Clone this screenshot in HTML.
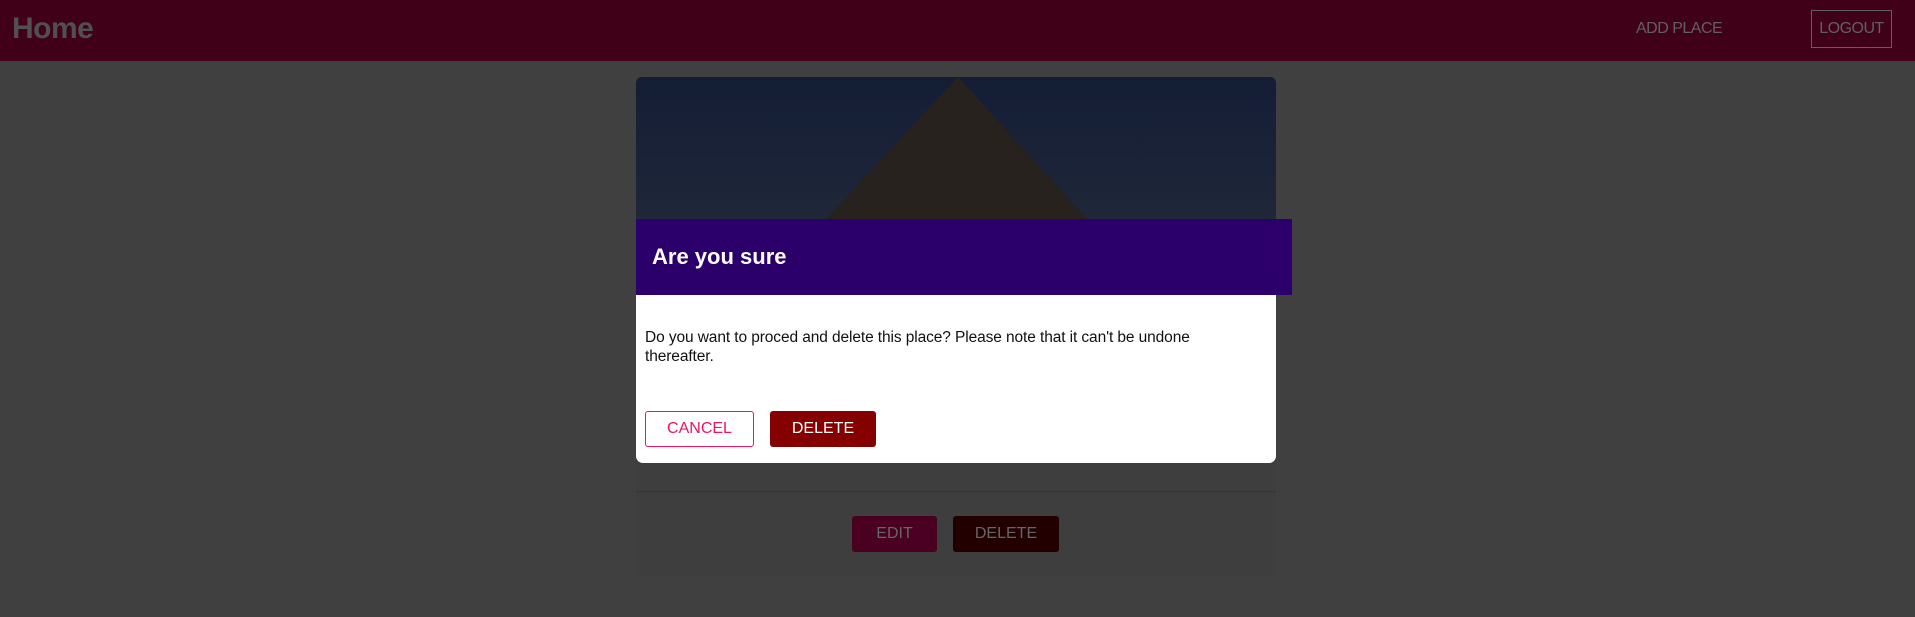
<!DOCTYPE html>
<html><head><meta charset="utf-8"><style>
*{margin:0;padding:0;box-sizing:border-box}
body{width:1915px;height:617px;background:#404040;font-family:"Liberation Sans",sans-serif;position:relative;overflow:hidden}
.hdr{position:absolute;left:0;top:0;width:1915px;height:61px;background:#400018}
.home{position:absolute;left:12px;top:12px;font-size:30px;font-weight:bold;color:#505050;letter-spacing:-0.5px}
.add{position:absolute;left:1636px;top:20px;font-size:16px;color:#606060;letter-spacing:-0.5px}
.lo{position:absolute;left:1811px;top:10px;width:81px;height:38px;border:1px solid #606060;color:#606060;font-size:16px;text-align:center;line-height:36px;letter-spacing:-0.5px}
.card{position:absolute;left:636px;top:77px;width:640px;height:499px;background:#3e3e3e;border-radius:6px;overflow:hidden}
.img{position:absolute;left:0;top:0}
.div{position:absolute;left:0;top:414px;width:640px;height:1px;background:#363636}
.b{position:absolute;top:439px;height:36px;line-height:36px;text-align:center;color:#666;font-size:16px;border-radius:3px}
.modal{position:absolute;left:636px;top:219px;width:640px;height:244px;background:#fff;border-radius:0 0 7px 7px}
.mh{position:absolute;left:636px;top:219px;width:656px;height:76px;background:#2b006b}
.mh span{position:absolute;left:16px;top:25px;color:#fff;font-size:22px;font-weight:bold}
.txt{position:absolute;left:645px;top:328px;width:620px;font-size:15.5px;line-height:19px;color:#111;letter-spacing:-0.1px}
.cancel{position:absolute;left:645px;top:411px;width:109px;height:36px;border:1px solid #f0145a;border-radius:3px;color:#f0145a;font-size:16px;text-align:center;line-height:34px}
.del{position:absolute;left:770px;top:411px;width:106px;height:36px;background:#850000;border-radius:3px;color:#fff;font-size:16px;text-align:center;line-height:36px}
</style></head><body>
<div class="hdr"><div class="home">Home</div><div class="add">ADD PLACE</div><div class="lo">LOGOUT</div></div>
<div class="card">
<svg class="img" width="640" height="142"><defs><linearGradient id="g" x1="0" y1="0" x2="0" y2="1"><stop offset="0" stop-color="#131d35"/><stop offset="1" stop-color="#1f2738"/></linearGradient></defs><rect width="640" height="142" fill="url(#g)"/><polygon points="322,0 451,142 190,142" fill="#28221f"/></svg>
<div class="div"></div>
<div class="b" style="left:216px;width:85px;background:#4a0020">EDIT</div>
<div class="b" style="left:317px;width:106px;background:#220000">DELETE</div>
</div>
<div class="modal"></div>
<div class="mh"><span>Are you sure</span></div>
<div class="txt">Do you want to proced and delete this place? Please note that it can't be undone<br>thereafter.</div>
<div class="cancel">CANCEL</div>
<div class="del">DELETE</div>
</body></html>
